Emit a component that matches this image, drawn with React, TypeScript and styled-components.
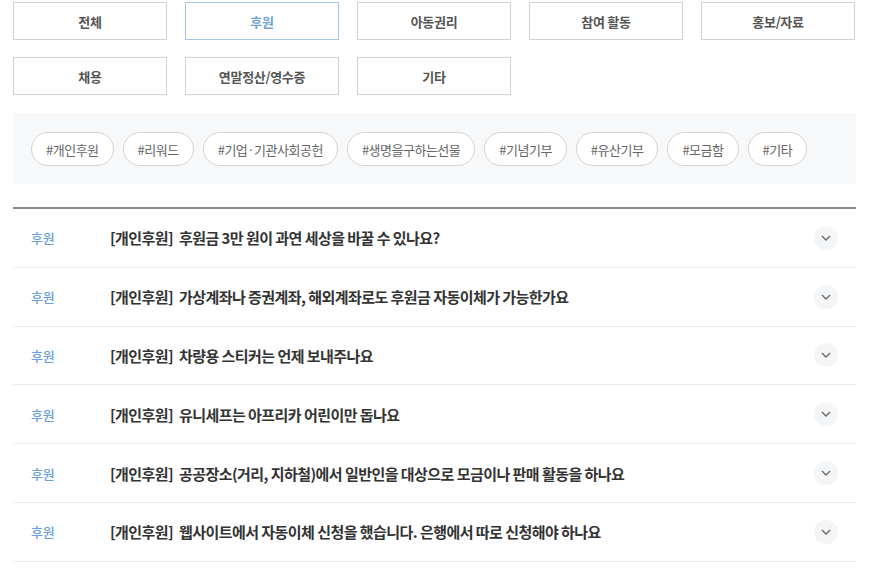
import React from "react";
import styled, { createGlobalStyle } from "styled-components";

const Global = createGlobalStyle`
  html, body { margin: 0; padding: 0; background: #fff; }
  body { font-family: "Noto Sans CJK KR", "Noto Sans", sans-serif; }
  * { box-sizing: border-box; }
`;

const Page = styled.div`
  padding: 2px 14px 0 13px;
  width: 870px;
`;

const CategoryGrid = styled.div`
  display: grid;
  grid-template-columns: repeat(5, 154px);
  column-gap: 18px;
  row-gap: 17px;
`;

const CategoryButton = styled.button<{ $active?: boolean }>`
  height: 38px;
  border: 1px solid ${(p) => (p.$active ? "#a3c6ea" : "#d2d2d2")};
  background: #fff;
  color: ${(p) => (p.$active ? "#6fa2d9" : "#555")};
  font-family: "Noto Sans CJK KR", sans-serif;
  font-size: 13px;
  font-weight: 700;
  letter-spacing: -0.3px;
  padding: 0;
  cursor: pointer;
`;

const TagBox = styled.div`
  margin-top: 18px;
  background: #f7f8fa;
  padding: 19px 18px 18px;
  display: flex;
  flex-wrap: wrap;
  gap: 9px;
`;

const Tag = styled.span`
  height: 34px;
  padding: 0 14px;
  border: 1px solid #d4d4d4;
  border-radius: 17px;
  background: #fff;
  color: #666;
  font-size: 13px;
  letter-spacing: -0.5px;
  display: inline-flex;
  align-items: center;
`;

const List = styled.ul`
  list-style: none;
  margin: 23px 0 0;
  padding: 0;
  border-top: 2px solid #8a8a8a;
`;

const Row = styled.li`
  height: 58.8px;
  border-bottom: 1px solid #ebebeb;
  display: flex;
  align-items: center;
  padding: 0 18px;
`;

const Category = styled.span`
  width: 79px;
  color: #6a9fd8;
  font-size: 13px;
  font-weight: 500;
  letter-spacing: -0.3px;
`;

const Title = styled.span`
  flex: 1;
  color: #333;
  font-size: 15px;
  font-weight: 700;
  letter-spacing: -0.55px;
  white-space: pre;
`;

const Toggle = styled.span`
  width: 24px;
  height: 24px;
  border-radius: 50%;
  background: #f4f5f7;
  display: inline-flex;
  align-items: center;
  justify-content: center;
`;

const categories = ["전체", "후원", "아동권리", "참여 활동", "홍보/자료", "채용", "연말정산/영수증", "기타"];
const tags = ["#개인후원", "#리워드", "#기업·기관사회공헌", "#생명을구하는선물", "#기념기부", "#유산기부", "#모금함", "#기타"];
const items = [
  "후원금 3만 원이 과연 세상을 바꿀 수 있나요?",
  "가상계좌나 증권계좌, 해외계좌로도 후원금 자동이체가 가능한가요",
  "차량용 스티커는 언제 보내주나요",
  "유니세프는 아프리카 어린이만 돕나요",
  "공공장소(거리, 지하철)에서 일반인을 대상으로 모금이나 판매 활동을 하나요",
  "웹사이트에서 자동이체 신청을 했습니다. 은행에서 따로 신청해야 하나요",
];

const Chevron = () => (
  <svg width="10" height="6" viewBox="0 0 10 6">
    <path d="M1 1l4 4 4-4" fill="none" stroke="#666" strokeWidth="1.3" />
  </svg>
);

export default function App() {
  return (
    <Page>
      <Global />
      <CategoryGrid>
        {categories.map((c) => (
          <CategoryButton key={c} $active={c === "후원"}>
            {c}
          </CategoryButton>
        ))}
      </CategoryGrid>
      <TagBox>
        {tags.map((t) => (
          <Tag key={t}>{t}</Tag>
        ))}
      </TagBox>
      <List>
        {items.map((t) => (
          <Row key={t}>
            <Category>후원</Category>
            <Title>{`[개인후원]  ${t}`}</Title>
            <Toggle>
              <Chevron />
            </Toggle>
          </Row>
        ))}
      </List>
    </Page>
  );
}
